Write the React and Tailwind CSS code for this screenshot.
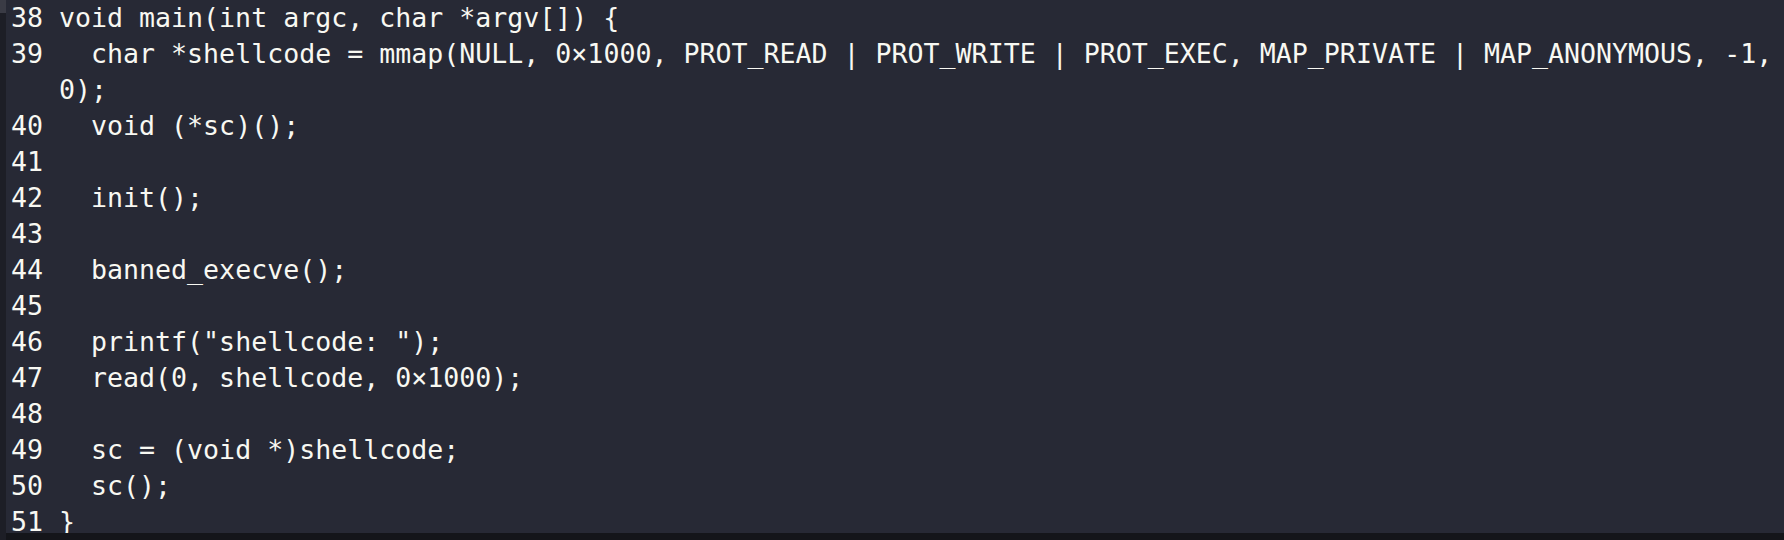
import React from "react";

const lines = [
  ["38", "void main(int argc, char *argv[]) {"],
  ["39", "  char *shellcode = mmap(NULL, 0×1000, PROT_READ | PROT_WRITE | PROT_EXEC, MAP_PRIVATE | MAP_ANONYMOUS, -1, 0);"],
  ["40", "  void (*sc)();"],
  ["41", ""],
  ["42", "  init();"],
  ["43", ""],
  ["44", "  banned_execve();"],
  ["45", ""],
  ["46", "  printf(\"shellcode: \");"],
  ["47", "  read(0, shellcode, 0×1000);"],
  ["48", ""],
  ["49", "  sc = (void *)shellcode;"],
  ["50", "  sc();"],
  ["51", "}"],
];

export default function App() {
  return (
    <div
      className="w-[1784px] h-[540px] overflow-hidden bg-[#272935] flex text-[#f8f8f2]"
      style={{ fontFamily: '"DejaVu Sans Mono", "Liberation Mono", monospace' }}
    >
      <div className="w-[6px] flex flex-col shrink-0">
        <div className="h-[13px] bg-[#3a3b45]" />
        <div className="flex-1 bg-[#1d1e26]" />
      </div>
      <div className="flex-1 flex flex-col border-b-[7px] border-[#14151a] overflow-hidden">
        {lines.map(([n, code]) => (
          <div key={n} className="flex text-[26.6px] leading-[36px]">
            <div className="w-[53px] pl-[5px] shrink-0 whitespace-pre">{n}</div>
            <div className="flex-1 whitespace-pre-wrap break-words">{code || " "}</div>
          </div>
        ))}
      </div>
    </div>
  );
}
